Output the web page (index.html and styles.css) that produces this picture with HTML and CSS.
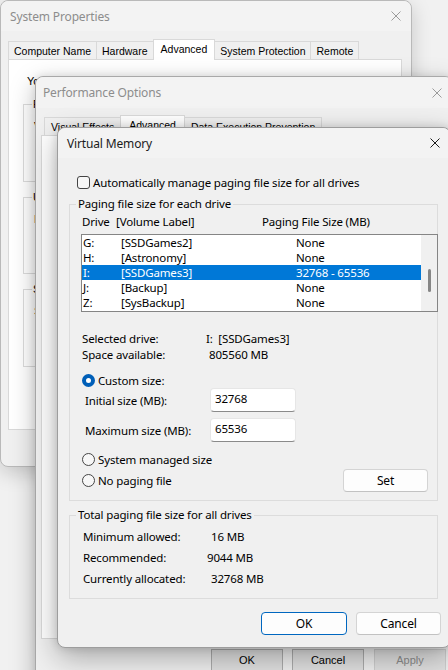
FILE: index.html
```html
<!DOCTYPE html>
<html lang="en">
<head>
    <meta charset="UTF-8">
    <meta name="viewport" content="width=device-width, initial-scale=1.0">
    <link rel="stylesheet" href="styles.css">
    <title>Virtual Memory</title>
</head>
<body>
    <div class="desktop">

        <!-- back window -->
        <section class="window win_sys">
            <header class="titlebar">
                <span class="title">System Properties</span>
                <svg class="close" viewBox="0 0 10 10"><path d="M0.5 0.5 9.5 9.5M9.5 0.5 0.5 9.5"/></svg>
            </header>
            <nav class="tabs">
                <span class="tab">Computer Name</span>
                <span class="tab">Hardware</span>
                <span class="tab tab_on">Advanced</span>
                <span class="tab">System Protection</span>
                <span class="tab">Remote</span>
            </nav>
            <div class="tab_panel sys_panel">
                <p class="note">You must be logged on as an Administrator to make most of these changes.</p>
                <fieldset class="old_group">
                    <legend>Performance</legend>
                    <p>Visual effects, processor scheduling, memory usage, and virtual memory</p>
                </fieldset>
                <fieldset class="old_group">
                    <legend>User Profiles</legend>
                    <p>Desktop settings related to your sign-in</p>
                </fieldset>
                <fieldset class="old_group">
                    <legend>Startup and Recovery</legend>
                    <p>System startup, system failure, and debugging information</p>
                </fieldset>
            </div>
        </section>

        <!-- middle window -->
        <section class="window win_perf">
            <header class="titlebar">
                <span class="title">Performance Options</span>
                <svg class="close" viewBox="0 0 10 10"><path d="M0.5 0.5 9.5 9.5M9.5 0.5 0.5 9.5"/></svg>
            </header>
            <nav class="tabs perf_tabs">
                <span class="tab">Visual Effects</span>
                <span class="tab tab_on">Advanced</span>
                <span class="tab">Data Execution Prevention</span>
            </nav>
            <div class="tab_panel perf_panel"></div>
            <div class="perf_buttons">
                <span class="old_btn">OK</span>
                <span class="old_btn">Cancel</span>
                <span class="old_btn old_btn_off">Apply</span>
            </div>
        </section>

        <!-- front window -->
        <section class="window win_vm">
            <header class="titlebar">
                <span class="title">Virtual Memory</span>
                <svg class="close" viewBox="0 0 10 10"><path d="M0.5 0.5 9.5 9.5M9.5 0.5 0.5 9.5"/></svg>
            </header>
            <div class="vm_body">
                <label class="check_row"><span class="checkbox"></span>Automatically manage paging file size for all drives</label>

                <fieldset class="group group_drives">
                    <legend>Paging file size for each drive</legend>
                    <div class="drive_head"><span>Drive</span><span>[Volume Label]</span><span>Paging File Size (MB)</span></div>
                    <div class="drive_list">
                        <div class="drive_rows">
                            <div class="drive_row"><span>G:</span><span>[SSDGames2]</span><span>None</span></div>
                            <div class="drive_row"><span>H:</span><span>[Astronomy]</span><span>None</span></div>
                            <div class="drive_row drive_sel"><span>I:</span><span>[SSDGames3]</span><span>32768 - 65536</span></div>
                            <div class="drive_row"><span>J:</span><span>[Backup]</span><span>None</span></div>
                            <div class="drive_row"><span>Z:</span><span>[SysBackup]</span><span>None</span></div>
                        </div>
                        <div class="scrollbar"><span class="thumb"></span></div>
                    </div>

                    <div class="info_rows">
                        <span>Selected drive:</span><span>I:&nbsp; [SSDGames3]</span>
                        <span>Space available:</span><span class="nudge">805560 MB</span>
                    </div>

                    <div class="radio_row radio_custom"><span class="radio radio_on"></span>Custom size:</div>
                    <div class="size_row"><span>Initial size (MB):</span><span class="textbox">32768</span></div>
                    <div class="size_row size_row2"><span>Maximum size (MB):</span><span class="textbox">65536</span></div>
                    <div class="radio_row radio_sys"><span class="radio"></span>System managed size</div>
                    <div class="last_row">
                        <div class="radio_row"><span class="radio"></span>No paging file</div>
                        <button class="btn btn_set">Set</button>
                    </div>
                </fieldset>

                <fieldset class="group group_total">
                    <legend>Total paging file size for all drives</legend>
                    <div class="total_rows">
                        <span>Minimum allowed:</span><span>16 MB</span>
                        <span>Recommended:</span><span class="pull">9044 MB</span>
                        <span>Currently allocated:</span><span>32768 MB</span>
                    </div>
                </fieldset>

                <div class="vm_buttons">
                    <button class="btn btn_default">OK</button>
                    <button class="btn">Cancel</button>
                </div>
            </div>
        </section>

    </div>
</body>
</html>
```

FILE: styles.css
```css
* {
    margin: 0;
    padding: 0;
    box-sizing: border-box;
}
body {
    background-color: #efefef;
    font-family: "Noto Sans", "Open Sans", sans-serif;
    font-size: 11.5px;
    letter-spacing: -0.15px;
    color: #000;
}
.desktop {
    position: relative;
    width: 448px;
    height: 670px;
    overflow: hidden;
    background: #f1f1f1;
}

/* windows on the desktop */
.window {
    position: absolute;
    background-color: #f0f0f0;
    border: 1px solid #b9b9b9;
    border-radius: 8px;
}
.win_sys {
    left: 0;
    top: 0;
    width: 412px;
    height: 467px;
    box-shadow: 0 6px 20px rgba(0, 0, 0, 0.18);
}
.win_perf {
    left: 35px;
    top: 76px;
    width: 418px;
    height: 620px;
    border-color: #a9a9a9;
    box-shadow: 0 8px 26px rgba(0, 0, 0, 0.26), 0 0 8px rgba(0, 0, 0, 0.1);
}
.win_vm {
    left: 57px;
    top: 127px;
    width: 394px;
    height: 521px;
    border-color: #9d9d9d;
    box-shadow: 0 10px 30px rgba(0, 0, 0, 0.3), 0 0 10px rgba(0, 0, 0, 0.14);
}

.titlebar {
    height: 30px;
    display: flex;
    align-items: center;
    justify-content: space-between;
    padding: 0 10px 0 9px;
    background-color: #f3f3f3;
    border-radius: 8px 8px 0 0;
}
.title {
    color: #8d8d8d;
    font-size: 12px;
}
.close {
    width: 10px;
    height: 10px;
    stroke: #9b9b9b;
    stroke-width: 1;
    fill: none;
}
.win_perf .titlebar {
    height: 31px;
    padding-left: 7px;
}
.win_vm .title {
    color: #1b1b1b;
}
.win_vm .close {
    stroke: #1b1b1b;
}

/* old style tabs */
.tabs {
    display: flex;
    align-items: flex-end;
    height: 20px;
    margin-top: 8px;
    padding-left: 7px;
    font-family: "Liberation Sans", Arial, sans-serif;
    font-size: 10.5px;
    letter-spacing: 0;
}
.tab {
    height: 18px;
    line-height: 18px;
    padding: 0 5px;
    border: 1px solid #d9d9d9;
    border-bottom: 0;
    background-color: #f0f0f0;
    margin-right: -1px;
}
.tab_on {
    height: 21px;
    line-height: 18px;
    padding: 0 7px;
    background-color: #fff;
    margin-bottom: -1px;
    position: relative;
}
.tab_panel {
    background-color: #fff;
    border: 1px solid #d9d9d9;
}
.sys_panel {
    margin: 0 9px 0 7px;
    height: 371px;
    padding: 15px 14px 0 14px;
    font-family: "Liberation Sans", Arial, sans-serif;
    font-size: 11px;
    letter-spacing: 0;
}
.note {
    margin-left: 4px;
    line-height: 13px;
    white-space: nowrap;
}
.old_group {
    border: 1px solid #dcdcdc;
    padding: 4px 8px 0 10px;
    margin-top: 10px;
    height: 84px;
    white-space: nowrap;
}
.old_group + .old_group {
    margin-top: 9px;
    height: 83px;
}
.old_group + .old_group + .old_group {
    height: 84px;
}
.old_group legend {
    padding: 0 1px;
    margin-left: -2px;
    line-height: 13px;
}
.old_group p {
    margin-top: 5px;
}

.perf_tabs {
    margin-top: 7px;
    padding-left: 8px;
}
.perf_tabs .tab {
    padding: 0 6px;
}
.perf_tabs .tab_on {
    padding: 0 8px;
}
.perf_panel {
    margin: 0 6px 0 5px;
    height: 504px;
}
.perf_buttons {
    display: flex;
    justify-content: flex-end;
    gap: 9px;
    margin: 10px 6px 0 0;
    font-family: "Liberation Sans", Arial, sans-serif;
    font-size: 11px;
    letter-spacing: 0;
}
.old_btn {
    width: 72px;
    height: 23px;
    line-height: 21px;
    text-align: center;
    border: 1px solid #adadad;
    background-color: #e1e1e1;
}
.old_btn_off {
    color: #8c8c8c;
    border-color: #cfcfcf;
    margin-left: 1px;
}

/* Virtual Memory body */
.vm_body {
    padding: 0 12px 0 11px;
}
.check_row {
    display: flex;
    align-items: center;
    gap: 3px;
    height: 16px;
    margin: 16px 0 0 8px;
}
.checkbox {
    width: 13px;
    height: 13px;
    border: 1px solid #444;
    border-radius: 3px;
    background-color: #f7f7f7;
}
.group {
    border: 1px solid #dcdcdc;
    padding: 2px 0 8px 6px;
    min-width: 0;
}
.group legend {
    padding: 0 2px;
    line-height: 16px;
}
.group_drives {
    margin-top: 6px;
}
.drive_head {
    display: grid;
    grid-template-columns: 34px 146px auto;
    line-height: 16px;
    margin-left: 6px;
}
.drive_list {
    display: flex;
    width: 357px;
    height: 78px;
    margin: 4px 0 0 5px;
    border: 1px solid #858585;
    background-color: #fff;
}
.drive_rows {
    width: 339px;
}
.drive_row {
    display: grid;
    grid-template-columns: 38px 175px auto;
    height: 15px;
    line-height: 15px;
    padding-left: 1px;
}
.drive_sel {
    background-color: #0078d7;
    color: #fff;
}
.scrollbar {
    flex: 1;
    background-color: #f0f0f0;
    padding: 34px 0 0 7px;
}
.thumb {
    display: block;
    width: 3px;
    height: 23px;
    border-radius: 2px;
    background-color: #868686;
}
.info_rows {
    display: grid;
    grid-template-columns: 124px auto;
    line-height: 16px;
    margin: 19px 0 0 6px;
}
.nudge {
    padding-left: 3px;
}
.radio_row {
    display: flex;
    align-items: center;
    gap: 3px;
    height: 16px;
    margin-left: 6px;
}
.radio_custom {
    margin-top: 9px;
}
.radio {
    width: 13px;
    height: 13px;
    border: 1px solid #454545;
    border-radius: 50%;
    background-color: #f7f7f7;
}
.radio_on {
    border: 4px solid #005fb8;
    background-color: #fff;
}
.size_row {
    display: grid;
    grid-template-columns: 125px 86px;
    align-items: center;
    margin-left: 9px;
}
.size_row2 {
    margin-top: 6px;
}
.textbox {
    height: 24px;
    padding: 2px 0 0 4px;
    line-height: 16px;
    background-color: #fff;
    border: 1px solid #e6e6e6;
    border-bottom-color: #8a8a8a;
    border-radius: 4px;
}
.radio_sys {
    margin-top: 9px;
}
.last_row {
    display: flex;
    align-items: center;
    justify-content: space-between;
    height: 24px;
    margin-top: 1px;
}
.last_row .radio_row {
    margin-top: 1px;
}
.btn {
    width: 86px;
    height: 23px;
    font-family: inherit;
    font-size: 12px;
    letter-spacing: inherit;
    color: #000;
    background-color: #fdfdfd;
    border: 1px solid #d4d4d4;
    border-bottom-color: #c2c2c2;
    border-radius: 4px;
}
.btn_set {
    width: 85px;
    margin-right: 9px;
}
.group_total {
    margin-top: 6px;
    padding: 3px 0 9px 6px;
}
.total_rows {
    display: grid;
    grid-template-columns: 128px auto;
    grid-auto-rows: 21px;
    line-height: 21px;
    margin-left: 7px;
}
.pull {
    margin-left: -4px;
}
.vm_buttons {
    display: flex;
    justify-content: flex-end;
    gap: 9px;
    margin: 13px -3px 0 0;
}
.btn_default {
    border-color: #0067c0;
}
.vm_buttons .btn + .btn {
    width: 85px;
}
```
